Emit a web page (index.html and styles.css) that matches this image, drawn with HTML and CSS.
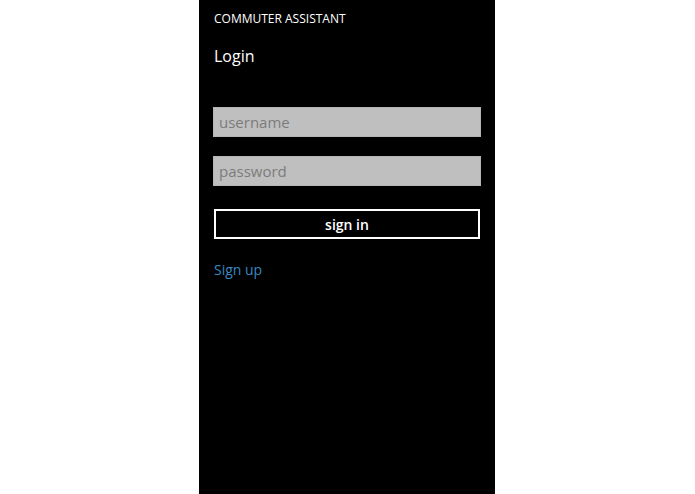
FILE: index.html
```html
<!DOCTYPE html>
<html>
<head>
<meta charset="utf-8">
<link rel="stylesheet" href="styles.css">
</head>
<body>
<div class="phone">
  <div class="app-title">COMMUTER ASSISTANT</div>
  <div class="page-title">Login</div>
  <form class="form">
    <input class="field" type="text" placeholder="username">
    <input class="field" type="password" placeholder="password">
    <button class="signin" type="button">sign in</button>
  </form>
  <a class="signup" href="#">Sign up</a>
</div>
</body>
</html>
```
FILE: styles.css
```css
html, body {
  margin: 0;
  padding: 0;
  background: #fff;
  height: 100%;
}
.phone {
  margin-left: 199px;
  width: 296px;
  height: 494px;
  background: #000;
  color: #fff;
  font-family: "Open Sans", "Noto Sans", sans-serif;
  box-sizing: border-box;
  padding: 10px 14px 0 14px;
  display: flex;
  flex-direction: column;
}
.app-title {
  font-size: 12px;
  line-height: 18px;
  padding-left: 1px;
}
.page-title {
  font-size: 16px;
  line-height: 22px;
  margin-top: 17px;
  padding-left: 1px;
}
.form {
  margin: 40px 0 0 0;
  display: flex;
  flex-direction: column;
}
.field {
  width: 268px;
  height: 30px;
  box-sizing: border-box;
  background: #bfbfbf;
  border: 1px solid #b5b5b5;
  margin: 0 0 19px 0;
  padding: 0 0 0 5px;
  font-family: inherit;
  font-size: 15px;
  color: #555;
  outline: none;
  border-radius: 0;
}
.field::placeholder {
  color: #7c7c7c;
}
.field + .field {
  margin-bottom: 23px;
}
.signin {
  width: 266px;
  height: 30px;
  margin: 0 0 0 1px;
  box-sizing: border-box;
  background: #000;
  border: 2px solid #fff;
  color: #fff;
  font-family: inherit;
  font-size: 14px;
  font-weight: 600;
  padding: 0;
}
.signup {
  margin-top: 21px;
  margin-left: 1px;
  color: #3a88c2;
  text-decoration: none;
  font-size: 14px;
  line-height: 20px;
  align-self: flex-start;
}
```
